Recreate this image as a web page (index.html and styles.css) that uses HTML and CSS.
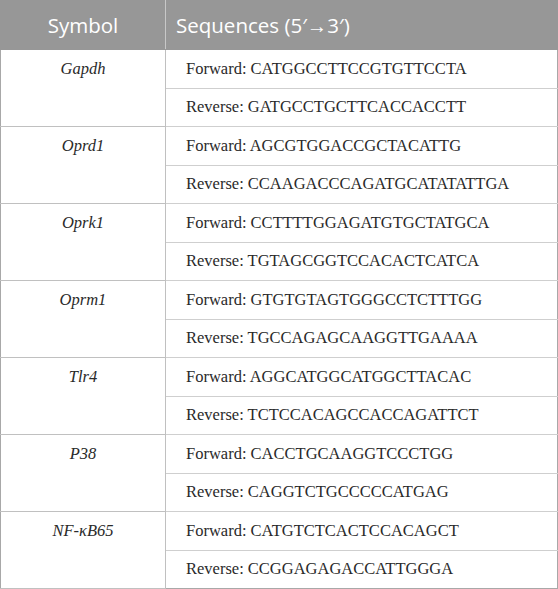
FILE: index.html
```html
<!DOCTYPE html>
<html>
<head>
<meta charset="utf-8">
<link rel="stylesheet" href="styles.css">
</head>
<body>
<table class="seq-table">
  <thead>
    <tr><th class="col-sym">Symbol</th><th class="col-seq">Sequences (5′→3′)</th></tr>
  </thead>
  <tbody>
    <tr><td class="sym" rowspan="2">Gapdh</td><td>Forward: CATGGCCTTCCGTGTTCCTA</td></tr>
    <tr><td>Reverse: GATGCCTGCTTCACCACCTT</td></tr>
    <tr><td class="sym" rowspan="2">Oprd1</td><td>Forward: AGCGTGGACCGCTACATTG</td></tr>
    <tr><td>Reverse: CCAAGACCCAGATGCATATATTGA</td></tr>
    <tr><td class="sym" rowspan="2">Oprk1</td><td>Forward: CCTTTTGGAGATGTGCTATGCA</td></tr>
    <tr><td>Reverse: TGTAGCGGTCCACACTCATCA</td></tr>
    <tr><td class="sym" rowspan="2">Oprm1</td><td>Forward: GTGTGTAGTGGGCCTCTTTGG</td></tr>
    <tr><td>Reverse: TGCCAGAGCAAGGTTGAAAA</td></tr>
    <tr><td class="sym" rowspan="2">Tlr4</td><td>Forward: AGGCATGGCATGGCTTACAC</td></tr>
    <tr><td>Reverse: TCTCCACAGCCACCAGATTCT</td></tr>
    <tr><td class="sym" rowspan="2">P38</td><td>Forward: CACCTGCAAGGTCCCTGG</td></tr>
    <tr><td>Reverse: CAGGTCTGCCCCCATGAG</td></tr>
    <tr><td class="sym" rowspan="2">NF-κB65</td><td>Forward: CATGTCTCACTCCACAGCT</td></tr>
    <tr><td>Reverse: CCGGAGAGACCATTGGGA</td></tr>
  </tbody>
</table>
</body>
</html>
```
FILE: styles.css
```css
html, body {
  margin: 0;
  padding: 0;
  background: #fff;
}
.seq-table {
  width: 558px;
  border-collapse: collapse;
  table-layout: fixed;
  font-family: "Liberation Serif", serif;
  font-size: 16.5px;
  color: #2a2a2a;
}
.seq-table th {
  background: #979797;
  color: #fff;
  font-family: "Open Sans", sans-serif;
  font-weight: normal;
  font-size: 20.5px;
  height: 49px;
  padding: 0 10px;
  box-sizing: border-box;
  border: 1px solid #979797;
  text-align: left;
}
.seq-table th.col-sym {
  width: 165px;
  text-align: center;
  border-right: 1px solid #c8c8c8;
}
.seq-table td {
  height: 38.5px;
  padding: 0 20px;
  box-sizing: border-box;
  border: 1px solid #cfcfcf;
  border-right-color: #a8a8a8;
  vertical-align: middle;
}
.seq-table td.sym {
  font-style: italic;
  text-align: center;
  vertical-align: top;
  padding-top: 9px;
  border-left-color: #a8a8a8;
  border-right-color: #c0c0c0;
  border-bottom-color: #c0c0c0;
}
.seq-table tbody tr:last-child td {
  border-bottom-color: #a8a8a8;
}
```
